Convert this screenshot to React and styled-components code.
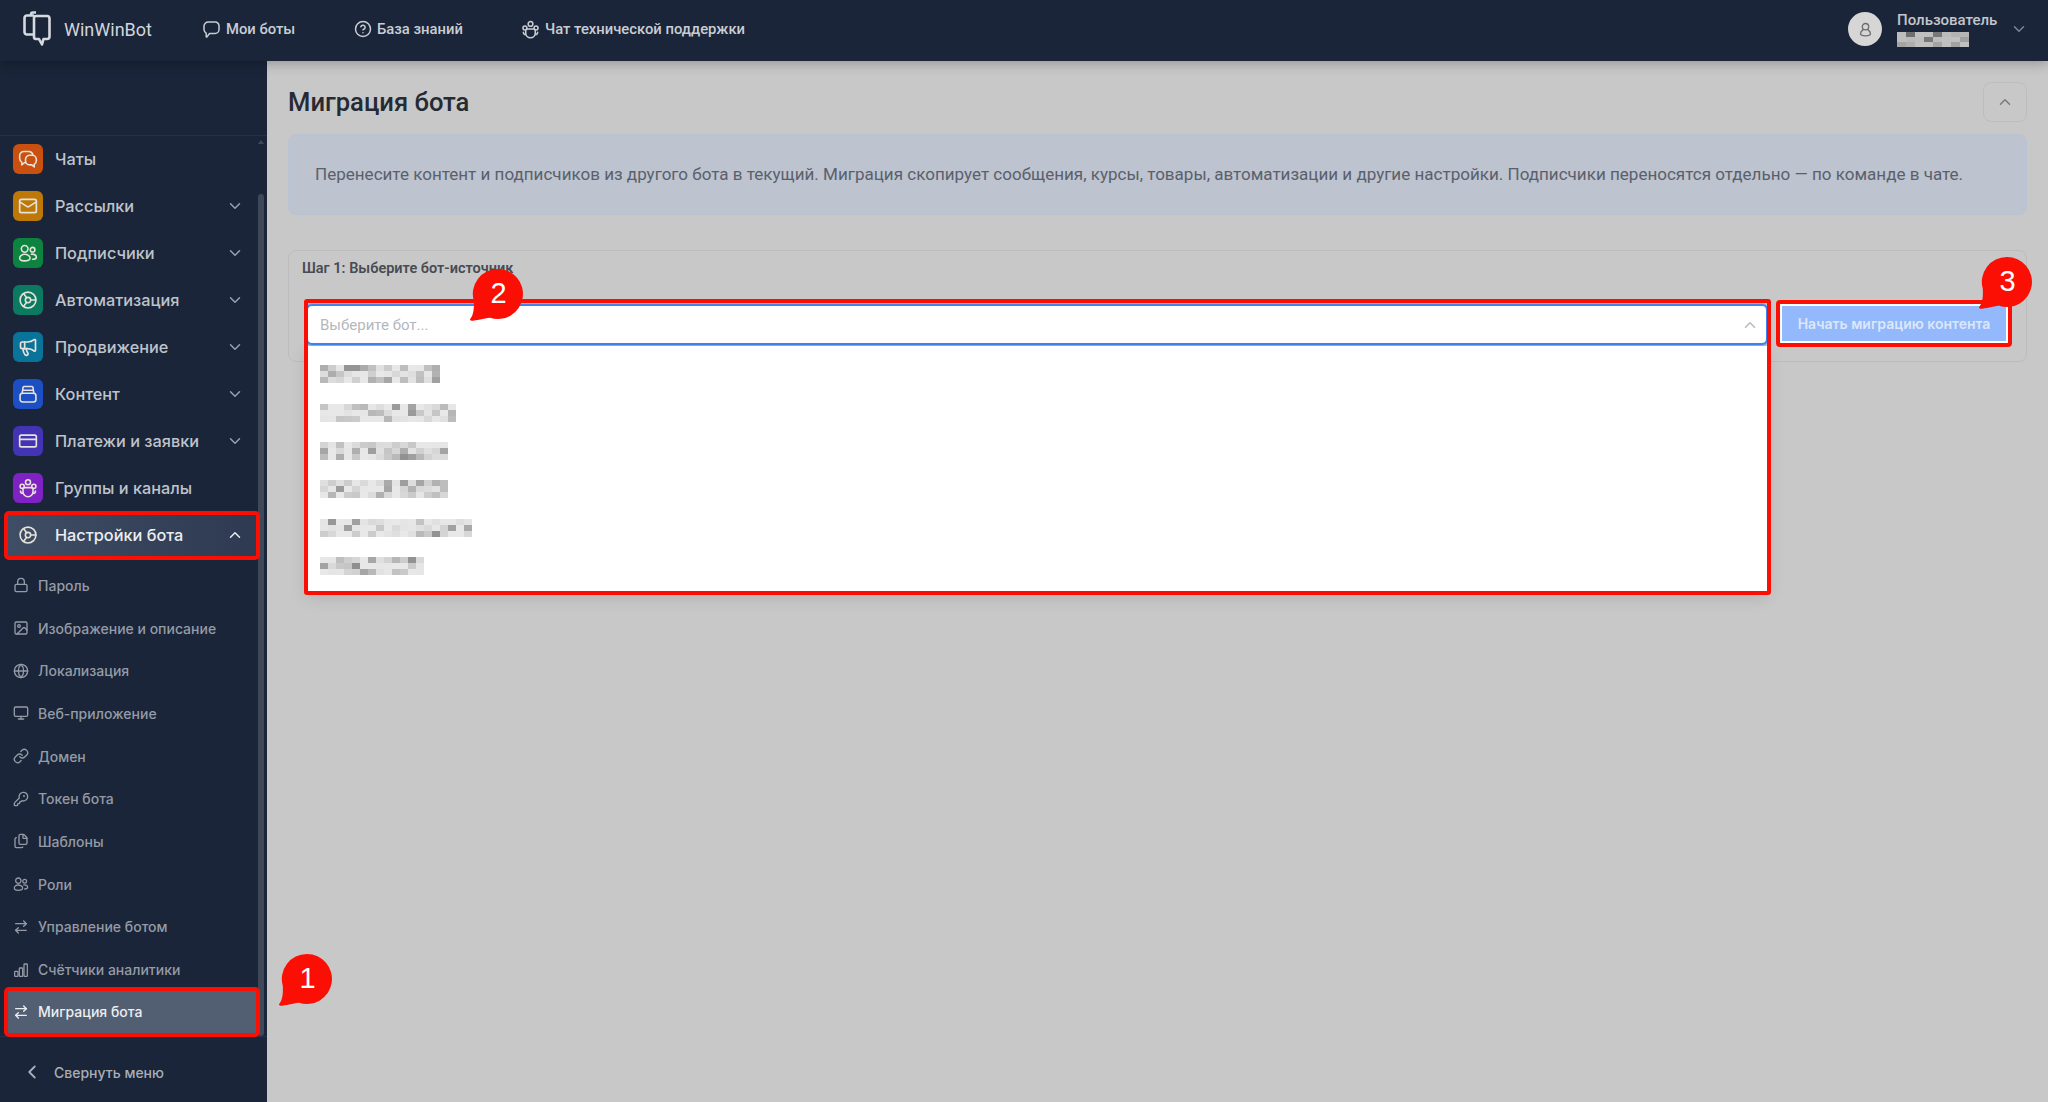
import React from "react";
import styled, { createGlobalStyle } from "styled-components";
import {
  ArrowRightLeft,
  ChevronDown,
  ChevronLeft,
  ChevronUp,
  CircleHelp,
  CreditCard,
  Files,
  Globe,
  Image,
  KeyRound,
  Link,
  Lock,
  Mail,
  Megaphone,
  Monitor,
} from "lucide-react";

const GlobalStyle = createGlobalStyle`
  html, body {
    margin: 0;
    padding: 0;
    height: 100%;
    overflow: hidden;
    background: #c8c8c8;
  }
  * { box-sizing: border-box; }
`;

const Glyph = ({ size = 20, width = 1.9, children }) => (
  <svg width={size} height={size} viewBox="0 0 24 24" fill="none" stroke="currentColor" strokeWidth={width} strokeLinecap="round" strokeLinejoin="round">
    {children}
  </svg>
);

// three spoke wheel, used by automation and bot settings
const Wheel = (props) => (
  <Glyph {...props}>
    <circle cx="12" cy="12" r="9.500" />
    <circle cx="12" cy="12" r="3.200" />
    <path d="M15.200 12h6.300M10.400 9.200 6.600 4.300M10.400 14.800l-3.800 4.900" />
  </Glyph>
);

const Archive = (props) => (
  <Glyph {...props}>
    <rect x="2.500" y="11" width="19" height="10.500" rx="3" />
    <path d="M5 11 6 4.500A1.500 1.500 0 0 1 7.500 3h9A1.500 1.500 0 0 1 18 4.500L19 11M5.500 7.500h13" />
  </Glyph>
);

const Bubbles = (props) => (
  <Glyph {...props}>
    <path d="M9 16.500H7.500L4.500 19v-3.200A5 5 0 0 1 2 11.500V8a5 5 0 0 1 5-5h6a5 5 0 0 1 4.800 3.700" />
    <path d="M14 7.500h3a5 5 0 0 1 5 5v1.500a5 5 0 0 1-2.500 4.300V21.500L16.500 19H14a5 5 0 0 1-5-5v-1.500a5 5 0 0 1 5-5z" />
  </Glyph>
);

const People = (props) => (
  <Glyph {...props}>
    <circle cx="8" cy="7" r="4" />
    <circle cx="17.500" cy="8" r="2.800" />
    <path d="M7.500 21.500c-3 0-5.500-1-5.500-3.500s3-4.500 6-4.500 6.500 2 6.500 4.500-3.500 3.500-7 3.500zM16 13.500c3-.5 6 1 6 3.500 0 1.800-2 2.500-4.500 2.500" />
  </Glyph>
);

const Crowd = (props) => (
  <Glyph {...props}>
    <circle cx="12" cy="5" r="3" />
    <circle cx="5" cy="10" r="2.500" />
    <circle cx="19" cy="10" r="2.500" />
    <path d="M8 11.500h8a2 2 0 0 1 2 2v3a6 6 0 0 1-12 0v-3a2 2 0 0 1 2-2zM3 15.500a3 3 0 0 0 3 3M21 15.500a3 3 0 0 1-3 3" />
  </Glyph>
);

const Bubble = (props) => (
  <Glyph {...props}>
    <path d="M8 2.500h8.500a5 5 0 0 1 5 5V12a5 5 0 0 1-5 5H9.500l-3.200 4.300c-.5.500-1 .2-1-.4v-4.400A5.500 5.500 0 0 1 2.500 12V8a5.500 5.500 0 0 1 5.500-5.500z" />
  </Glyph>
);

const Bars = (props) => (
  <Glyph {...props}>
    <rect x="2.500" y="14" width="5" height="7.500" rx="1" />
    <rect x="9.500" y="9" width="5" height="12.500" rx="1" />
    <rect x="16.500" y="3" width="5" height="18.500" rx="1" />
  </Glyph>
);

const Person = (props) => (
  <Glyph {...props}>
    <circle cx="12" cy="8" r="4.500" />
    <path d="M8.500 12.500C6 14 5 16 5 18c0 2 2 3 7 3s7-1 7-3c0-2-1-4-3.500-5.500" />
  </Glyph>
);

const Logo = () => (
  <svg width="30" height="36" viewBox="0 0 30 36" fill="none" stroke="#d5d9e0" strokeWidth="2.600" strokeLinejoin="round">
    <path d="M9 5V3.500A2 2 0 0 1 11 1.500h3" />
    <path d="M14 5h11a2.500 2.500 0 0 1 2.500 2.500v18A2.500 2.500 0 0 1 25 28h-3.500L20 33.500 17 28h-3a2 2 0 0 1-2-2V7a2 2 0 0 1 2-2z" />
    <path d="M12 23.500H5A2.500 2.500 0 0 1 2.500 21V7A2.500 2.500 0 0 1 5 4.500h7" />
  </svg>
);

const mainItems = [
  { label: "Чаты", icon: <Bubbles />, color: "#c9500f" },
  { label: "Рассылки", icon: <Mail size={20} />, color: "#bd7808", arrow: true },
  { label: "Подписчики", icon: <People />, color: "#0c8440", arrow: true },
  { label: "Автоматизация", icon: <Wheel />, color: "#0b7a60", arrow: true },
  { label: "Продвижение", icon: <Megaphone size={20} />, color: "#09739a", arrow: true },
  { label: "Контент", icon: <Archive />, color: "#1d4fc4", arrow: true },
  { label: "Платежи и заявки", icon: <CreditCard size={20} />, color: "#4333b5", arrow: true },
  { label: "Группы и каналы", icon: <Crowd />, color: "#7f22c4" },
];

const subItems = [
  { label: "Пароль", icon: Lock },
  { label: "Изображение и описание", icon: Image },
  { label: "Локализация", icon: Globe },
  { label: "Веб-приложение", icon: Monitor },
  { label: "Домен", icon: Link },
  { label: "Токен бота", icon: KeyRound },
  { label: "Шаблоны", icon: Files },
  { label: "Роли", icon: People },
  { label: "Управление ботом", icon: ArrowRightLeft },
  { label: "Счётчики аналитики", icon: Bars },
];

const botWidths = [123, 138, 130, 130, 154, 110];

// grey cells that stand in for the hidden names
const shade = (row, col, seed) => {
  const n = Math.abs(Math.sin(row * 12.9 + col * 78.2 + seed * 37.7)) * 43758.5;
  const r = n - Math.floor(n);
  return Math.round(232 - r * r * r * 90);
};

const Mosaic = ({ width, rows = 3, cell = 8, rowHeight = 6, seed = 1, base = 0 }) => {
  const cols = Math.floor(width / cell);
  const cells = [];
  for (let r = 0; r < rows; r++) {
    for (let c = 0; c < cols; c++) {
      const g = shade(r, c, seed) - base;
      cells.push(<i key={`${r}-${c}`} style={{ background: `rgb(${g},${g},${g})` }} />);
    }
  }
  return (
    <MosaicGrid $cols={cols} $cell={cell} $rowHeight={rowHeight}>
      {cells}
    </MosaicGrid>
  );
};

const Badge = ({ n, $x, $y }) => (
  <BadgeWrap $x={$x} $y={$y}>
    <svg width="53" height="53" viewBox="0 0 53 53">
      <path d="M28 1a25 25 0 1 1-8 48.700C14 50.500 6 52.500 1.500 52.800c-1.500 0-1.800-1.300-1-2.300C3.500 47 4.200 40 3.800 33A25 25 0 0 1 28 1z" fill="#fb0f05" />
    </svg>
    <BadgeNum>{n}</BadgeNum>
  </BadgeWrap>
);

export default function App() {
  return (
    <Page>
      <GlobalStyle />
      <Header>
        <Brand>
          <Logo />
          <BrandName>WinWinBot</BrandName>
        </Brand>
        <TopNav>
          <TopLink $w={152}><Bubble size={19} />Мои боты</TopLink>
          <TopLink $w={167}><CircleHelp size={18} />База знаний</TopLink>
          <TopLink><Crowd size={19} />Чат технической поддержки</TopLink>
        </TopNav>
        <UserBox>
          <Avatar><Person size={17} /></Avatar>
          <UserText>
            <UserName>Пользователь</UserName>
            <Mosaic width={80} rows={3} cell={9} rowHeight={5} seed={5} base={40} />
          </UserText>
          <ChevronDown size={18} color="#7d8694" />
        </UserBox>
      </Header>

      <Body>
        <Sidebar>
          <SideTop />
          <SideScroll>
            <ScrollArrow />
            <ScrollThumb />
            {mainItems.map((item) => (
              <MainRow key={item.label}>
                <IconTile $color={item.color}>{item.icon}</IconTile>
                <RowLabel>{item.label}</RowLabel>
                {item.arrow && <ChevronDown size={18} color="#98a1ae" />}
              </MainRow>
            ))}
            <SettingsRow>
              <IconTile $color="transparent"><Wheel /></IconTile>
              <RowLabel>Настройки бота</RowLabel>
              <ChevronUp size={18} color="#e8ebef" />
            </SettingsRow>
            <SubList>
              {subItems.map(({ label, icon: Icon }) => (
                <SubRow key={label}>
                  <Icon size={16} />
                  {label}
                </SubRow>
              ))}
              <SubRow $active>
                <ArrowRightLeft size={16} />
                Миграция бота
              </SubRow>
            </SubList>
          </SideScroll>
          <Collapse>
            <ChevronLeft size={22} />
            Свернуть меню
          </Collapse>
        </Sidebar>

        <Main>
          <TitleRow>
            <Title>Миграция бота</Title>
            <UpButton><ChevronUp size={18} /></UpButton>
          </TitleRow>
          <InfoBox>
            Перенесите контент и подписчиков из другого бота в текущий. Миграция скопирует сообщения, курсы, товары, автоматизации и другие настройки. Подписчики переносятся отдельно — по команде в чате.
          </InfoBox>
          <StepCard>
            <StepTitle>Шаг 1: Выберите бот-источник</StepTitle>
            <StepRow>
              <SelectWrap>
                <SelectBox>
                  Выберите бот...
                  <ChevronUp size={18} color="#b5b9c0" />
                </SelectBox>
                <Dropdown>
                  {botWidths.map((w, i) => (
                    <DropItem key={i}>
                      <Mosaic width={w} seed={i + 1} />
                    </DropItem>
                  ))}
                </Dropdown>
                <DropOutline />
              </SelectWrap>
              <StartButton>Начать миграцию контента</StartButton>
            </StepRow>
          </StepCard>
        </Main>
      </Body>

      <Badge n={1} $x={279} $y={953} />
      <Badge n={2} $x={470} $y={268} />
      <Badge n={3} $x={1979} $y={256} />
    </Page>
  );
}

const Page = styled.div`
  position: relative;
  width: 2048px;
  height: 1102px;
  overflow: hidden;
  display: flex;
  flex-direction: column;
  font-family: Roboto, "Noto Sans", sans-serif;
`;

const Header = styled.header`
  height: 61px;
  flex: none;
  background: #1a2539;
  display: flex;
  align-items: center;
  padding: 0 20px 3px 22px;
  color: #c9cdd3;
  box-shadow: 0 2px 12px rgba(0, 0, 0, 0.28);
  z-index: 2;
`;

const Brand = styled.div`
  display: flex;
  align-items: center;
  gap: 12px;
  width: 180px;
`;

const BrandName = styled.span`
  font-size: 18px;
  color: #d2d5da;
`;

const TopNav = styled.nav`
  display: flex;
  align-items: center;
`;

const TopLink = styled.a`
  display: flex;
  align-items: center;
  gap: 5px;
  font-size: 14.800px;
  font-weight: 500;
  width: ${(p) => (p.$w ? `${p.$w}px` : "auto")};
`;

const UserBox = styled.div`
  margin-left: auto;
  display: flex;
  align-items: center;
  gap: 15px;
`;

const Avatar = styled.div`
  width: 34px;
  height: 34px;
  border-radius: 50%;
  background: #d6d6d6;
  color: #6d6d6d;
  display: flex;
  align-items: center;
  justify-content: center;
`;

const UserText = styled.div`
  width: 98px;
  display: flex;
  flex-direction: column;
  gap: 3px;
`;

const UserName = styled.div`
  font-size: 15px;
  font-weight: 500;
  color: #c3c6cb;
`;

const MosaicGrid = styled.div`
  display: grid;
  grid-template-columns: repeat(${(p) => p.$cols}, ${(p) => p.$cell}px);
  grid-auto-rows: ${(p) => p.$rowHeight}px;
  width: max-content;
`;

const Body = styled.div`
  flex: 1;
  display: flex;
  min-height: 0;
`;

const Sidebar = styled.aside`
  width: 267px;
  flex: none;
  background: #1a2539;
  display: flex;
  flex-direction: column;
  font-family: Inter, Roboto, sans-serif;
`;

const SideTop = styled.div`
  height: 75px;
  flex: none;
  border-bottom: 1px solid #25314a;
`;

const SideScroll = styled.div`
  position: relative;
  flex: 1;
  padding: 0 8px 0 0;
  display: flex;
  flex-direction: column;
  border-bottom: 1px solid #25314a;
`;

const ScrollArrow = styled.div`
  position: absolute;
  right: 3px;
  top: 4px;
  border: 3px solid transparent;
  border-top: 0;
  border-bottom: 4px solid #3e4859;
`;

const ScrollThumb = styled.div`
  position: absolute;
  right: 3px;
  top: 58px;
  bottom: 0;
  width: 6px;
  border-radius: 3px;
  background: #3e4859;
`;

const MainRow = styled.div`
  height: 47px;
  flex: none;
  display: flex;
  align-items: center;
  gap: 12px;
  padding: 0 15px 2px 13px;
  color: #bfc3ca;
`;

const SettingsRow = styled(MainRow)`
  position: relative;
  z-index: 1;
  margin: 0 0 0 5px;
  padding-left: 8px;
  height: 47px;
  color: #eceef1;
  border-radius: 4px;
  background: linear-gradient(90deg, #3f4d65, #2d3a51);
  outline: 4px solid #fb0f05;
  outline-offset: -3px;
`;

const IconTile = styled.span`
  width: 30px;
  height: 30px;
  flex: none;
  border-radius: 6px;
  background: ${(p) => p.$color};
  color: #e6e2da;
  display: flex;
  align-items: center;
  justify-content: center;
`;

const RowLabel = styled.span`
  flex: 1;
  font-size: 16.300px;
  font-weight: 500;
`;

const SubList = styled.div`
  padding-top: 5px;
  display: flex;
  flex-direction: column;
`;

const SubRow = styled.div`
  height: 42.700px;
  flex: none;
  display: flex;
  align-items: center;
  gap: 9px;
  padding-left: 13px;
  font-size: 14px;
  font-weight: 500;
  color: ${(p) => (p.$active ? "#eceef1" : "#959ba6")};
  ${(p) =>
    p.$active &&
    `
    position: relative;
    z-index: 1;
    margin-left: 5px;
    padding-left: 8px;
    height: 48px;
    margin-top: -3px;
    background: #525f73;
    border-radius: 4px;
    outline: 4px solid #fb0f05;
    outline-offset: -3px;
  `}
`;

const Collapse = styled.div`
  height: 65px;
  flex: none;
  display: flex;
  align-items: center;
  gap: 11px;
  padding: 5px 0 0 21px;
  font-size: 14px;
  font-weight: 500;
  color: #a9aeb7;
`;

const Main = styled.main`
  flex: 1;
  background: #c8c8c8;
  padding: 21px 21px 0;
  display: flex;
  flex-direction: column;
`;

const TitleRow = styled.div`
  height: 40px;
  display: flex;
  align-items: center;
  justify-content: space-between;
`;

const Title = styled.h1`
  margin: 0;
  font-size: 25.600px;
  font-weight: 500;
  color: #252a33;
`;

const UpButton = styled.button`
  width: 44px;
  height: 40px;
  padding: 0;
  border: 1px solid #bbbdc1;
  border-radius: 8px;
  background: transparent;
  color: #767a81;
  display: flex;
  align-items: center;
  justify-content: center;
`;

const InfoBox = styled.div`
  margin-top: 12px;
  height: 81px;
  padding: 0 26px 2px;
  display: flex;
  align-items: center;
  border: 1px solid #b8c3d3;
  border-radius: 8px;
  background: #bdc3cf;
  font-size: 17.050px;
  color: #5a606b;
  white-space: nowrap;
`;

const StepCard = styled.section`
  margin-top: 35px;
  height: 112px;
  padding: 9px 14px 0 13px;
  border: 1px solid #bcbcbc;
  border-radius: 8px;
`;

const StepTitle = styled.div`
  font-size: 14.500px;
  font-weight: 600;
  line-height: 17px;
  color: #484b52;
`;

const StepRow = styled.div`
  margin-top: 27px;
  display: flex;
  align-items: flex-start;
  gap: 11px;
`;

const SelectWrap = styled.div`
  position: relative;
  flex: 1;
  margin-left: 4px;
`;

const SelectBox = styled.div`
  height: 41px;
  padding: 0 7px 0 12px;
  display: flex;
  align-items: center;
  justify-content: space-between;
  background: #fff;
  border: 2px solid #3f85f0;
  border-radius: 6px;
  box-shadow: 0 0 0 1px rgba(63, 133, 240, 0.4);
  font-size: 15px;
  color: #b4b7bd;
`;

const Dropdown = styled.div`
  position: absolute;
  top: 42px;
  left: 0;
  right: 0;
  height: 245px;
  background: #fff;
  padding-top: 9px;
  display: flex;
  flex-direction: column;
  box-shadow: 0 6px 16px rgba(0, 0, 0, 0.12);
`;

const DropItem = styled.div`
  height: 38.400px;
  flex: none;
  display: flex;
  align-items: center;
  padding-left: 14px;
`;

const DropOutline = styled.div`
  position: absolute;
  top: -5px;
  left: -2px;
  right: -3px;
  height: 296px;
  border: 4px solid #fb0f05;
  border-radius: 3px;
  pointer-events: none;
`;

const StartButton = styled.button`
  width: 236px;
  height: 47px;
  margin: -4px 0 0 -3px;
  flex: none;
  border: 4px solid #fb0f05;
  outline: 2px solid #fff;
  outline-offset: -6px;
  border-radius: 4px;
  background: #93b8fb;
  color: #dce7fb;
  font-family: Inter, Roboto, sans-serif;
  font-size: 14px;
  font-weight: 600;
`;

const BadgeWrap = styled.div`
  position: absolute;
  left: ${(p) => p.$x}px;
  top: ${(p) => p.$y}px;
  width: 53px;
  height: 53px;
  z-index: 5;
  svg {
    display: block;
  }
`;

const BadgeNum = styled.span`
  position: absolute;
  inset: 0 0 2px 4px;
  display: flex;
  align-items: center;
  justify-content: center;
  color: #fff;
  font-family: "Liberation Sans", sans-serif;
  font-size: 29px;
`;
